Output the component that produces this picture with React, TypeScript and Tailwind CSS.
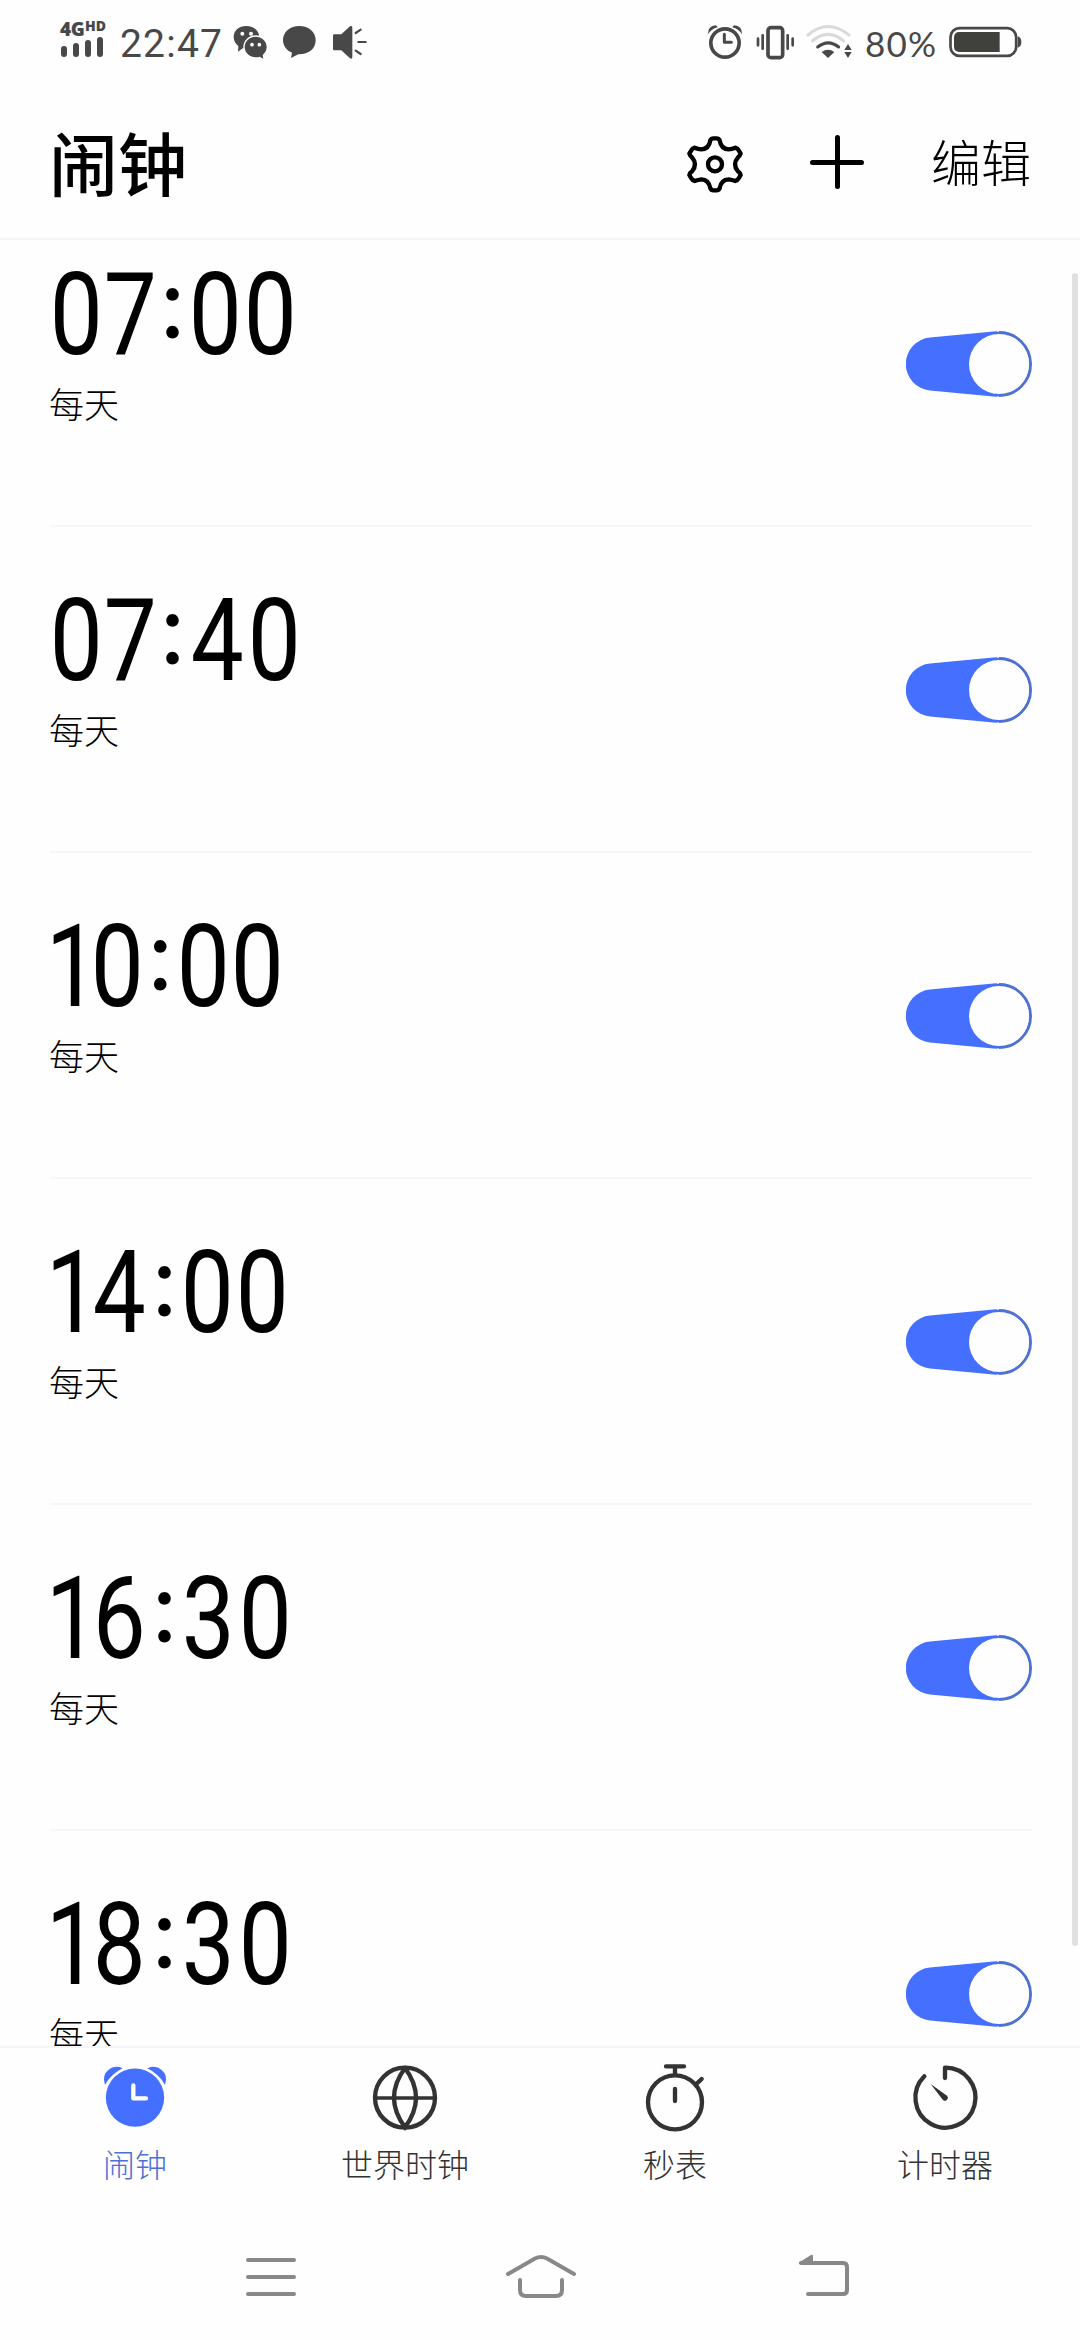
import type { ReactNode } from 'react';

interface Alarm {
  time: string;
  repeat: string;
}

const alarms: Alarm[] = [
  { time: '07:00', repeat: '每天' },
  { time: '07:40', repeat: '每天' },
  { time: '10:00', repeat: '每天' },
  { time: '14:00', repeat: '每天' },
  { time: '16:30', repeat: '每天' },
  { time: '18:30', repeat: '每天' },
];

// proportional digit widths of the clock face
const digitWidth: Record<string, string> = {
  '0': "w-[54.7px] font-['Roboto',sans-serif]",
  '1': "w-[41px] pl-[5px] font-['Roboto',sans-serif]",
  '3': "w-[57.6px] font-['Roboto',sans-serif]",
  '4': "w-[59px] font-['Roboto',sans-serif]",
  '6': "w-[59px] font-['Roboto',sans-serif]",
  '7': "w-[53.4px] font-['Roboto',sans-serif]",
  '8': "w-[59px] font-['Roboto',sans-serif]",
  ':': "w-[31px] -mt-[16px] font-['Lato',sans-serif] text-[100px]",
};

function StatusBar() {
  return (
    <div className="flex h-[84px] shrink-0 items-start pl-[60px] font-['Roboto',sans-serif] text-[#484848]">
      <div className="mt-[20px] w-[60px]">
        <div className="flex h-[18px] items-start font-['Open_Sans',sans-serif] leading-none font-extrabold">
          <span className="w-[25px] text-[19px] leading-[18px] tracking-[-0.5px]">4G</span>
          <span className="text-[14px] leading-[12px]">HD</span>
        </div>
        <div className="flex h-[19px] items-end gap-[6px] pl-px">
          <span className="h-[11px] w-[6px] rounded-[3px] bg-[#484848]" />
          <span className="h-[14px] w-[6px] rounded-[3px] bg-[#484848]" />
          <span className="h-[17px] w-[6px] rounded-[3px] bg-[#484848]" />
          <span className="h-[20px] w-[6px] rounded-[3px] bg-[#484848]" />
        </div>
      </div>
      <span className="mt-[24px] w-[113px] text-[39px] leading-[40px] tracking-[1.2px]">22:47</span>

      {/* wechat */}
      <svg className="mt-[25px] h-[35px] w-[35px]" viewBox="0 0 105 105" fill="#484848">
        <path d="M40 3C18 3 2 17 2 36c0 12 6 20 14 27l-1 17 14-10 11 1 39-32C80 18 62 3 40 3z" />
        <ellipse cx="68" cy="66" rx="37" ry="35" fill="#fefefe" />
        <path d="M68 35c-18 0-33 14-33 31s15 31 33 31c5 0 9-1 12-2l11 6-2-11c7-6 12-14 12-24 0-17-15-31-33-31z" />
        <g fill="#fefefe">
          <circle cx="28" cy="26" r="6" />
          <circle cx="54" cy="26" r="6" />
          <circle cx="57" cy="59" r="5.5" />
          <circle cx="79" cy="59" r="5.5" />
        </g>
      </svg>
      {/* message */}
      <svg className="mt-[25px] ml-[14px] h-[35px] w-[35px]" viewBox="0 0 105 105" fill="#484848">
        <path d="M52 3C24 3 3 21 3 45c0 18 11 32 27 38l-3 16 22-11c30 1 52-16 52-43C101 21 80 3 52 3z" />
      </svg>
      {/* speaker */}
      <svg className="mt-[25px] ml-[15px] h-[35px] w-[35px]" viewBox="0 0 105 105" fill="#484848">
        <path d="M7 28h21L54 4q7-4 7 4v88q0 8-7 4L28 76H7q-4 0-4-4V32q0-4 4-4z" />
        <path d="M71 24l15-10M79 51h22M71 77l15 10" stroke="#484848" strokeWidth="6.5" strokeLinecap="round" />
      </svg>

      {/* alarm */}
      <svg className="mt-[24px] ml-[340px] h-[36px] w-[36px]" viewBox="0 0 108 108" fill="none" stroke="#484848">
        <circle cx="54" cy="57" r="42.500" strokeWidth="11" />
        <path d="M52 31v24h21" strokeWidth="9" strokeLinecap="round" strokeLinejoin="round" />
        <path d="M3 31Q2 5 27 4l5 6Q13 15 3 31zM105 31Q106 5 81 4l-5 6q19 5 29 21z" fill="#484848" stroke="none" />
      </svg>
      {/* vibrate */}
      <svg className="mt-[25px] ml-[13px] h-[35px] w-[39px]" viewBox="0 0 117 105" fill="none" stroke="#484848">
        <rect x="36" y="8" width="44" height="90" rx="9" strokeWidth="11" />
        <path d="M6 41v20M20 31v40M95 31v40M110 41v20" strokeWidth="8" strokeLinecap="round" />
      </svg>
      {/* wifi */}
      <svg className="mt-[24px] ml-[10px] h-[36px] w-[48px]" viewBox="0 0 144 108" fill="none" strokeLinecap="round">
        <path d="M9 33Q69-18 132 33" stroke="#dadada" strokeWidth="9" />
        <path d="M22 51Q69 11 116 51" stroke="#dadada" strokeWidth="9" />
        <path d="M38 69Q70 44 101 69" stroke="#484848" strokeWidth="9" />
        <path d="M50 84q19-14 38 0L69 102zM118 78l11-18 11 18zM118 84h22l-11 18z" fill="#484848" />
      </svg>
      <span className="mt-[24px] ml-[12px] w-[83px] font-['Lato',sans-serif] text-[35px] leading-[38px] tracking-[1.2px]">80%</span>
      {/* battery */}
      <svg className="mt-[26px] h-[32px] w-[74px]" viewBox="0 0 222 96" fill="#484848">
        <rect x="7.500" y="6.500" width="197" height="83" rx="27" fill="none" stroke="#484848" strokeWidth="8" />
        <path d="M34 18h121v60H34q-16 0-16-17V35q0-17 16-17z" fill="#40403c" />
        <path d="M209 31q11 3 11 17t-11 17z" />
      </svg>
    </div>
  );
}

function Header() {
  return (
    <header className="flex h-[156px] shrink-0 items-start border-b-2 border-[#f5f5f5] pl-[49px] text-black">
      <h1 className="mt-[27px] w-[637px] text-[69px] leading-[100px] font-medium">闹钟</h1>
      <svg className="mt-[51px] h-[59px] w-[58px]" viewBox="0 0 174 177" fill="none" stroke="black" strokeWidth="13">
        <path
          strokeLinejoin="round"
          d="M73 16Q76 10 82 10H92Q98 10 101 16Q105 42 128 43Q138 42 148 38Q155 40 158 46L164 56Q162 62 156 67Q138 88 156 109Q163 114 164 120L158 130Q155 136 148 138Q138 134 128 133Q105 134 101 160Q98 166 92 166H82Q76 166 73 160Q69 134 46 133Q36 134 26 138Q19 136 16 130L10 120Q11 114 18 109Q36 88 18 67Q12 62 10 56L16 46Q19 40 26 38Q36 42 46 43Q69 42 73 16Z"
        />
        <circle cx="87" cy="88" r="21" />
      </svg>
      <svg className="mt-[51px] ml-[66px] h-[54px] w-[54px]" viewBox="0 0 54 54" stroke="black" strokeWidth="5" strokeLinecap="round">
        <path d="M2.500 27.500h49M27.500 2.500v49" />
      </svg>
      <span className="mt-[40px] ml-[67px] text-[50px] leading-[72px] font-light">编辑</span>
    </header>
  );
}

function Toggle() {
  return (
    <svg className="h-[66px] w-[126px]" viewBox="0 0 126 66">
      <path d="M24 6.600L90 .2A33 33 0 0 1 90 65.800L24 59.400A26.500 26.500 0 0 1 24 6.600z" fill="#456fff" />
      <path d="M93 1.500A31.500 31.500 0 0 1 93 64.500" fill="none" stroke="#4f71cf" strokeWidth="3" />
      <circle cx="93" cy="33" r="30" fill="#fefefe" />
    </svg>
  );
}

function AlarmRow({ alarm }: { alarm: Alarm }) {
  return (
    <li className="flex h-[326px] shrink-0 justify-between border-b-2 border-[#f7f7f7]">
      <div className="pt-[57px]">
        <div className="-ml-[1px] flex h-[114px] text-[115px] leading-[114px] font-normal">
          {alarm.time.split('').map((char, i) => (
            <span key={i} className={`flex justify-center ${digitWidth[char]}`}>
              <span className={char === ':' ? '' : 'scale-x-[0.82]'}>{char}</span>
            </span>
          ))}
        </div>
        <div className="mt-[6px] -ml-px text-[35px] leading-[50px] font-light">{alarm.repeat}</div>
      </div>
      <div className="pt-[130px]">
        <Toggle />
      </div>
    </li>
  );
}

function Tab({ label, active, children }: { label: string; active?: boolean; children: ReactNode }) {
  return (
    <div className={`flex flex-col items-center pt-[14px] ${active ? 'text-[#4c6fd8]' : 'text-[#333333]'}`}>
      <svg className="h-[72px] w-[72px]" viewBox="0 0 216 216" fill="none" stroke="#333333" strokeWidth="13" strokeLinecap="round">
        {children}
      </svg>
      <span className="mt-[6px] text-[32px] leading-[46px] font-light">{label}</span>
    </div>
  );
}

function TabBar() {
  return (
    <nav className="grid h-[174px] shrink-0 grid-cols-4 border-t-2 border-[#f5f5f5]">
      <Tab label="闹钟" active>
        <g fill="#456fff" stroke="none">
          <circle cx="108" cy="107" r="87.500" />
          <path d="M18 69Q8 40 28 24Q46 8 71 19Q36 36 18 69zM198 69Q208 40 188 24Q170 8 145 19Q180 36 198 69z" />
        </g>
        <path d="M103 70v39h38" stroke="#fefefe" strokeLinejoin="round" />
      </Tab>
      <Tab label="世界时钟">
        <circle cx="108" cy="107" r="90" />
        <path d="M18 108h180" strokeWidth="11" />
        <path d="M108 18Q42 107 108 196Q174 107 108 18" />
      </Tab>
      <Tab label="秒表">
        <circle cx="108" cy="121" r="81" />
        <path d="M81 13h54M108 13v24M172 66l16-15M108 81v36" />
      </Tab>
      <Tab label="计时器">
        <path d="M46 43A90 90 0 1 0 108 17V48" strokeLinejoin="round" />
        <path d="M65 66L114 101Q120 108 113 114Q106 120 100 112z" fill="#333333" stroke="none" />
      </Tab>
    </nav>
  );
}

function SystemNav() {
  return (
    <div className="flex flex-1 items-start pt-[34px] pl-[246px] text-[#888888]">
      <svg className="h-[44px] w-[50px]" viewBox="0 0 50 44" stroke="currentColor" strokeWidth="4" strokeLinecap="round">
        <path d="M2 6h46M2 23h46M2 40h46" />
      </svg>
      <svg className="ml-[209px] h-[44px] w-[72px]" viewBox="0 0 72 44" fill="none" stroke="currentColor" strokeWidth="4" strokeLinecap="round">
        <path d="M3 20L30 4.500Q36 1.500 42 4.500L69 20" />
        <path d="M15 26v10q0 6 6 6h30q6 0 6-6V26" />
      </svg>
      <svg className="ml-[221px] h-[44px] w-[52px]" viewBox="0 0 52 44" fill="none" stroke="currentColor" strokeWidth="4" strokeLinecap="round">
        <path d="M3 9h42q4 0 4 4v23q0 4-4 4H10" />
        <path d="M1 8.500L13 1q2-1 2 1v8H1z" fill="currentColor" stroke="none" />
      </svg>
    </div>
  );
}

export default function App() {
  return (
    <div className="flex h-[2340px] w-[1080px] flex-col overflow-hidden bg-[#fefefe] font-['Noto_Sans_CJK_SC',sans-serif] text-black">
      <StatusBar />
      <Header />
      <main className="flex h-[1806px] shrink-0 justify-between overflow-hidden pl-[50px]">
        {/* list is scrolled a little under the header */}
        <ul className="-mt-[39px] flex w-[982px] flex-col">
          {alarms.map((alarm) => (
            <AlarmRow key={alarm.time} alarm={alarm} />
          ))}
        </ul>
        <div className="mt-[33px] mr-[2px] h-[1673px] w-[6px] rounded-full bg-[#e0e0e0]" />
      </main>
      <TabBar />
      <SystemNav />
    </div>
  );
}
